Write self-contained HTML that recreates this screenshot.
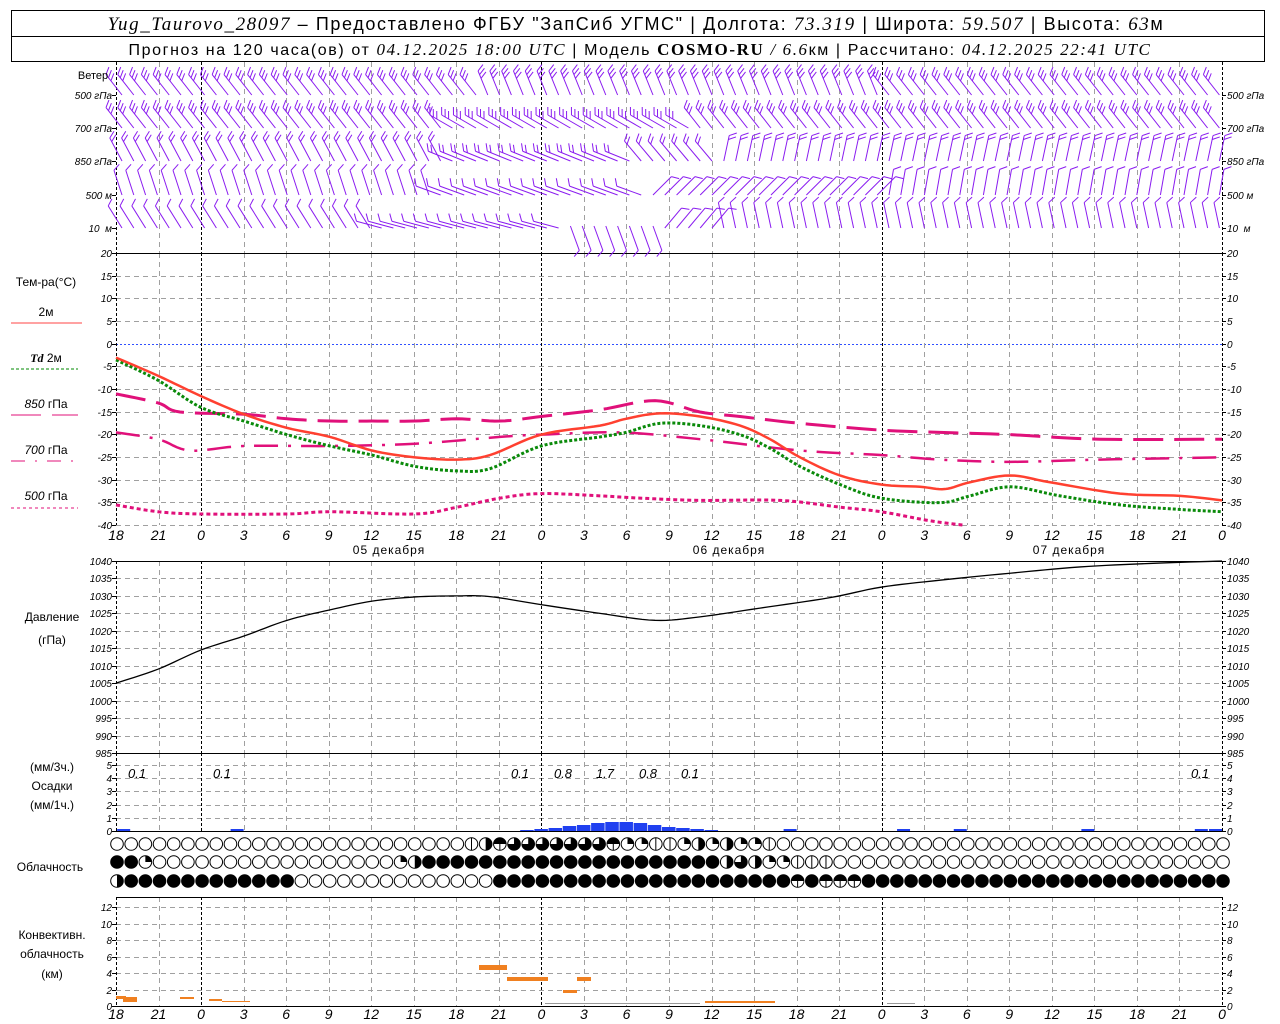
<!DOCTYPE html>
<html><head><meta charset="utf-8">
<style>
html,body{margin:0;padding:0;background:#fff;}
svg{display:block;}
.t{font-family:"Liberation Sans",sans-serif;fill:#000;}
.i{font-family:"Liberation Serif",serif;font-style:italic;fill:#000;}
.tk{font-family:"Liberation Sans",sans-serif;font-style:italic;font-size:10px;fill:#000;}
.hr{font-family:"Liberation Sans",sans-serif;font-style:italic;font-size:14px;fill:#000;text-anchor:middle;}
.lb{font-family:"Liberation Sans",sans-serif;font-size:12px;fill:#000;text-anchor:middle;}
</style></head>
<body>
<svg id="s" width="1280" height="1024" viewBox="0 0 1280 1024" xmlns="http://www.w3.org/2000/svg">
<rect x="0" y="0" width="1280" height="1024" fill="#fff"/>
<rect x="11.5" y="10.5" width="1253" height="51" fill="none" stroke="#000"/>
<line x1="11" y1="36.5" x2="1265" y2="36.5" stroke="#000"/>
<text x="636" y="30" text-anchor="middle" style="font-size:18px;letter-spacing:1.6px" class="t"><tspan class="i" font-size="19">Yug_Taurovo_28097</tspan> – Предоставлено ФГБУ "ЗапСиб УГМС" | Долгота: <tspan class="i" font-size="19">73.319</tspan> | Широта: <tspan class="i" font-size="19">59.507</tspan> | Высота: <tspan class="i" font-size="19">63</tspan>м</text>
<text x="640" y="55" text-anchor="middle" style="font-size:16px;letter-spacing:1.6px" class="t">Прогноз на 120 часа(ов) от <tspan class="i" font-size="17">04.12.2025 18:00 UTC</tspan> | Модель <tspan font-family="Liberation Serif" font-weight="bold" font-size="17">COSMO-RU</tspan> <tspan class="i" font-size="17">/ 6.6</tspan>км | Рассчитано: <tspan class="i" font-size="17">04.12.2025 22:41 UTC</tspan></text>

<g id="grid"></g>
<g id="draw"></g>

<text x="93" y="79" class="t" font-size="11" text-anchor="middle">Ветер</text>
<g class="tk" text-anchor="end">
<text x="112" y="99">500 гПа</text><text x="112" y="132">700 гПа</text><text x="112" y="165">850 гПа</text><text x="112" y="199">500 м</text><text x="112" y="232">10 &#160;м</text>
</g>
<g class="tk">
<text x="1227" y="99">500 гПа</text><text x="1227" y="132">700 гПа</text><text x="1227" y="165">850 гПа</text><text x="1227" y="199">500 м</text><text x="1227" y="232">10 &#160;м</text>
</g>
<text x="46" y="286" class="lb">Тем-ра(°C)</text>
<text x="46" y="316" class="lb" font-size="11">2м</text>
<line x1="11" y1="323" x2="82" y2="323" stroke="#f44" stroke-width="1"/>
<text x="46" y="362" class="lb" font-size="11"><tspan class="i" font-weight="bold">Td</tspan>  2м</text>
<line x1="11" y1="369" x2="78" y2="369" stroke="#080" stroke-dasharray="3,2"/>
<text x="46" y="408" class="lb" font-size="11"><tspan font-style="italic">850</tspan> гПа</text>
<line x1="11" y1="415" x2="78" y2="415" stroke="#e0107a" stroke-dasharray="30,11"/>
<text x="46" y="454" class="lb" font-size="11"><tspan font-style="italic">700</tspan> гПа</text>
<line x1="11" y1="461" x2="78" y2="461" stroke="#e0107a" stroke-dasharray="14,10,2,10"/>
<text x="46" y="500" class="lb" font-size="11"><tspan font-style="italic">500</tspan> гПа</text>
<line x1="11" y1="508" x2="78" y2="508" stroke="#e0107a" stroke-dasharray="3,3"/>

<text x="52" y="621" class="lb">Давление</text>
<text x="52" y="644" class="lb">(гПа)</text>
<text x="52" y="771" class="lb">(мм/3ч.)</text>
<text x="52" y="790" class="lb">Осадки</text>
<text x="52" y="809" class="lb">(мм/1ч.)</text>
<text x="50" y="871" class="lb">Облачность</text>
<text x="52" y="939" class="lb">Конвективн.</text>
<text x="52" y="958" class="lb">облачность</text>
<text x="52" y="978" class="lb">(км)</text>

<g class="tk" text-anchor="end">
<text x="112" y="257">20</text><text x="112" y="280">15</text><text x="112" y="302">10</text><text x="112" y="325">5</text><text x="112" y="348">0</text><text x="112" y="370">-5</text><text x="112" y="393">-10</text><text x="112" y="416">-15</text><text x="112" y="438">-20</text><text x="112" y="461">-25</text><text x="112" y="484">-30</text><text x="112" y="506">-35</text><text x="112" y="529">-40</text>
<text x="112" y="565">1040</text><text x="112" y="582">1035</text><text x="112" y="600">1030</text><text x="112" y="617">1025</text><text x="112" y="635">1020</text><text x="112" y="652">1015</text><text x="112" y="670">1010</text><text x="112" y="687">1005</text><text x="112" y="705">1000</text><text x="112" y="722">995</text><text x="112" y="740">990</text><text x="112" y="757">985</text>
<text x="112" y="835">0</text><text x="112" y="822">1</text><text x="112" y="809">2</text><text x="112" y="795">3</text><text x="112" y="782">4</text><text x="112" y="769">5</text>
<text x="112" y="1010">0</text><text x="112" y="994">2</text><text x="112" y="977">4</text><text x="112" y="961">6</text><text x="112" y="944">8</text><text x="112" y="928">10</text><text x="112" y="911">12</text>
</g>
<g class="tk">
<text x="1227" y="257">20</text><text x="1227" y="280">15</text><text x="1227" y="302">10</text><text x="1227" y="325">5</text><text x="1227" y="348">0</text><text x="1227" y="370">-5</text><text x="1227" y="393">-10</text><text x="1227" y="416">-15</text><text x="1227" y="438">-20</text><text x="1227" y="461">-25</text><text x="1227" y="484">-30</text><text x="1227" y="506">-35</text><text x="1227" y="529">-40</text>
<text x="1227" y="565">1040</text><text x="1227" y="582">1035</text><text x="1227" y="600">1030</text><text x="1227" y="617">1025</text><text x="1227" y="635">1020</text><text x="1227" y="652">1015</text><text x="1227" y="670">1010</text><text x="1227" y="687">1005</text><text x="1227" y="705">1000</text><text x="1227" y="722">995</text><text x="1227" y="740">990</text><text x="1227" y="757">985</text>
<text x="1227" y="835">0</text><text x="1227" y="822">1</text><text x="1227" y="809">2</text><text x="1227" y="795">3</text><text x="1227" y="782">4</text><text x="1227" y="769">5</text>
<text x="1227" y="1010">0</text><text x="1227" y="994">2</text><text x="1227" y="977">4</text><text x="1227" y="961">6</text><text x="1227" y="944">8</text><text x="1227" y="928">10</text><text x="1227" y="911">12</text>
</g>

<g class="tk" text-anchor="middle">
<text x="137" y="778" font-size="13">0.1</text><text x="222" y="778" font-size="13">0.1</text><text x="520" y="778" font-size="13">0.1</text><text x="563" y="778" font-size="13">0.8</text><text x="605" y="778" font-size="13">1.7</text><text x="648" y="778" font-size="13">0.8</text><text x="690" y="778" font-size="13">0.1</text><text x="1200" y="778" font-size="13">0.1</text>
</g>

<g class="hr">
<text x="116" y="540">18</text><text x="158.5" y="540">21</text><text x="201" y="540">0</text><text x="243.6" y="540">3</text><text x="286.2" y="540">6</text><text x="328.7" y="540">9</text><text x="371.2" y="540">12</text><text x="413.8" y="540">15</text><text x="456.3" y="540">18</text><text x="498.9" y="540">21</text><text x="541.4" y="540">0</text><text x="583.9" y="540">3</text><text x="626.5" y="540">6</text><text x="669" y="540">9</text><text x="711.6" y="540">12</text><text x="754.1" y="540">15</text><text x="796.6" y="540">18</text><text x="839.2" y="540">21</text><text x="881.7" y="540">0</text><text x="924.3" y="540">3</text><text x="966.8" y="540">6</text><text x="1009.3" y="540">9</text><text x="1051.9" y="540">12</text><text x="1094.4" y="540">15</text><text x="1137" y="540">18</text><text x="1179.5" y="540">21</text><text x="1222" y="540">0</text>
<text x="116" y="1019">18</text><text x="158.5" y="1019">21</text><text x="201" y="1019">0</text><text x="243.6" y="1019">3</text><text x="286.2" y="1019">6</text><text x="328.7" y="1019">9</text><text x="371.2" y="1019">12</text><text x="413.8" y="1019">15</text><text x="456.3" y="1019">18</text><text x="498.9" y="1019">21</text><text x="541.4" y="1019">0</text><text x="583.9" y="1019">3</text><text x="626.5" y="1019">6</text><text x="669" y="1019">9</text><text x="711.6" y="1019">12</text><text x="754.1" y="1019">15</text><text x="796.6" y="1019">18</text><text x="839.2" y="1019">21</text><text x="881.7" y="1019">0</text><text x="924.3" y="1019">3</text><text x="966.8" y="1019">6</text><text x="1009.3" y="1019">9</text><text x="1051.9" y="1019">12</text><text x="1094.4" y="1019">15</text><text x="1137" y="1019">18</text><text x="1179.5" y="1019">21</text><text x="1222" y="1019">0</text>
</g>
<g class="lb" font-size="13" style="letter-spacing:1px">
<text x="389" y="554">05 декабря</text><text x="729" y="554">06 декабря</text><text x="1069" y="554">07 декабря</text>
</g>
</svg>
<script>
(function(){
var NS="http://www.w3.org/2000/svg";
var G=document.getElementById("grid"),D=document.getElementById("draw");
function el(p,n,a){var e=document.createElementNS(NS,n);for(var k in a)e.setAttribute(k,a[k]);p.appendChild(e);return e;}
function L(p,x1,y1,x2,y2,a){a=a||{};a.x1=x1;a.y1=y1;a.x2=x2;a.y2=y2;if(!a.stroke)a.stroke="#000";return el(p,"line",a);}
var X0=116,X1=1222,step=(X1-X0)/26;
var hy=[276,298,321,366,389,412,434,457,480,502,525, 578,596,613,631,648,666,683,701,718,736, 765,778,791,805,818, 907,924,940,957,973,990];
hy.forEach(function(y){L(G,X0,y+.5,X1,y+.5,{stroke:"#a0a0a0","stroke-dasharray":"5,4"});});
L(G,X0,344.5,X1,344.5,{stroke:"#3050ff","stroke-dasharray":"2,2"});
for(var k=0;k<=26;k++){var x=Math.round(X0+k*step)+.5;var mid=(k==2||k==10||k==18);
 var a=mid?{stroke:"#000","stroke-dasharray":"3,2"}:{stroke:"#a0a0a0","stroke-dasharray":"5,4"};
 if(k==0||k==26)a={stroke:"#000","stroke-dasharray":"3,2"};
 [[62,253],[253,525],[561,753],[753,831],[897,1006]].forEach(function(r){var b={};for(var q in a)b[q]=a[q];L(G,x,r[0],x,r[1],b);});
}
[253,561,753,831,897,1006].forEach(function(y){L(G,X0,y+.5,X1,y+.5,{stroke:"#000"});});
function ticks(list){list.forEach(function(y){L(G,X0-4,y+.5,X0,y+.5);L(G,X1,y+.5,X1+4,y+.5);});}
ticks([253,276,298,321,344,366,389,412,434,457,480,502,525,561,578,596,613,631,648,666,683,701,718,736,753,765,778,791,805,818,831,907,924,940,957,973,990,1006,95,128,161,195,228]);
function ty(v){return 344-v*4.533;}
function poly(pts,fy,attr){var s="";for(var i=0;i<pts.length;i+=2)s+=pts[i]+","+fy(pts[i+1])+" ";attr.points=s;attr.fill="none";el(D,"polyline",attr);}
function smooth(pts,n){
 var out=[];var P=[];for(var i=0;i<pts.length;i+=2)P.push([pts[i],pts[i+1]]);
 for(var i=0;i<P.length-1;i++){var p0=P[Math.max(0,i-1)],p1=P[i],p2=P[i+1],p3=P[Math.min(P.length-1,i+2)];
  for(var t=0;t<1;t+=1/n){var t2=t*t,t3=t2*t;
   var f=function(a,b,c,d){return 0.5*((2*b)+(-a+c)*t+(2*a-5*b+4*c-d)*t2+(-a+3*b-3*c+d)*t3);};
   out.push(f(p0[0],p1[0],p2[0],p3[0]),f(p0[1],p1[1],p2[1],p3[1]));}}
 out.push(P[P.length-1][0],P[P.length-1][1]);return out;}
var T500=[116,-35.5,158,-37,201,-37.5,287,-37.5,330,-37,415,-37.5,457,-36,500,-34,541,-33,600,-33.5,640,-34,700,-34.5,780,-34.5,840,-36,881,-37,930,-39,965,-40];
poly(smooth(T500,8),ty,{stroke:"#e0107a","stroke-width":3,"stroke-dasharray":"4,3"});
var T700=[116,-19.5,158,-21,190,-23.5,244,-22.5,330,-22.5,415,-22,500,-20.5,541,-20,620,-19.5,700,-21,800,-23.5,881,-24.5,940,-25.5,1010,-26,1100,-25.5,1222,-25];
poly(smooth(T700,8),ty,{stroke:"#e0107a","stroke-width":2.5,"stroke-dasharray":"24,10,3,10"});
var T850=[116,-11,158,-13,180,-15,244,-15.5,287,-16.5,330,-17,372,-17,415,-17,457,-16.5,500,-17,541,-16,600,-14.5,655,-12.5,700,-15,740,-16,800,-17.5,881,-19,940,-19.5,1010,-20,1100,-21,1222,-21];
poly(smooth(T850,8),ty,{stroke:"#e0107a","stroke-width":3,"stroke-dasharray":"30,11"});
var TD=[116,-3.5,158,-8,201,-14,244,-17,287,-20,330,-22.5,372,-24.5,415,-27,457,-28,490,-27.5,541,-22.5,600,-20.5,626,-19.5,660,-17.5,700,-18,740,-20,770,-23,800,-27,840,-31,881,-34,940,-35,970,-33.5,1010,-31.5,1060,-33.5,1120,-35.5,1180,-36.5,1222,-37];
poly(smooth(TD,8),ty,{stroke:"#0a8a0a","stroke-width":3,"stroke-dasharray":"3,2"});
var T2=[116,-3,158,-7,201,-11.5,244,-15.5,287,-18.5,330,-20.5,372,-23.5,415,-25,457,-25.5,490,-24.5,541,-20,600,-18,626,-16.5,660,-15.3,700,-16,740,-18,770,-21,800,-25,840,-29,881,-31,920,-31.5,945,-32,970,-30.5,1010,-29,1050,-30.5,1120,-33,1180,-33.5,1222,-34.5];
poly(smooth(T2,8),ty,{stroke:"#ff4030","stroke-width":2.5});
var P=[116,1005,158,1009,201,1014.5,244,1018.5,287,1023,330,1026,372,1028.5,415,1029.7,457,1030,490,1029.8,541,1027.5,600,1025,655,1023,700,1024,760,1026.5,830,1029.5,881,1032.5,940,1034.5,1010,1036.5,1080,1038.3,1150,1039.3,1222,1040];
poly(smooth(P,8),function(p){return 561+(1040-p)*3.49;},{stroke:"#000","stroke-width":1.3});
var hs=(X1-X0)/78;
var pb=[[29,1],[30,2],[31,3],[32,5],[33,6],[34,8],[35,9],[36,9],[37,8],[38,6],[39,4],[40,3],[41,2],[42,1]];
pb.forEach(function(b){var x=X0+b[0]*hs-7;el(D,"rect",{x:x,y:831-b[1],width:13.5,height:b[1],fill:"#2040f0"});});
[1,9,48,56,60,69,77,78].forEach(function(i){el(D,"rect",{x:X0+i*hs-13,y:829,width:13,height:2,fill:"#2040f0"});});
var cv=[[116,996,10,3],[123,997,14,5],[180,997,14,2],[209,999,13,2],[222,1001,28,1],[479,965,28,5],[507,977,41,4],[563,990,14,3],[577,977,14,4],[705,1001,70,2]];
cv.forEach(function(c){el(D,"rect",{x:c[0],y:c[1],width:c[2],height:c[3],fill:"#f08020"});});
L(D,545,1003.5,700,1003.5,{stroke:"#999"});L(D,887,1003.5,915,1003.5,{stroke:"#999"});
function rowStr(){var a=[];for(var i=0;i<79;i++)a.push('o');return a;}
function fill(a,from,to,c){for(var i=from;i<=to;i++)a[i]=c;}
var r1=rowStr();r1[25]='l';r1[26]='h';r1[27]='e';fill(r1,28,34,'t');r1[35]='e';r1[36]='q';r1[37]='q';r1[38]='l';r1[39]='l';r1[40]='q';r1[41]='h';r1[42]='q';r1[43]='h';r1[44]='q';r1[45]='q';r1[46]='l';
var r2=rowStr();r2[0]='f';r2[1]='f';r2[2]='q';r2[20]='q';r2[21]='h';fill(r2,22,42,'f');r2[43]='h';r2[44]='t';r2[45]='h';r2[46]='q';r2[47]='q';fill(r2,48,50,'l');
var r3=rowStr();r3[0]='h';fill(r3,1,12,'f');fill(r3,27,78,'f');[48,50,51,52].forEach(function(i){r3[i]='e';});
function cloud(x,y,c){var r=6.3;
 el(D,"circle",{cx:x,cy:y,r:r,fill:c=='f'?"#000":"#fff",stroke:"#000","stroke-width":1});
 if(c=='l')L(D,x,y-r,x,y+r);
 if(c=='h')el(D,"path",{d:"M"+x+","+(y-r)+" A"+r+","+r+" 0 0 1 "+x+","+(y+r)+" Z",fill:"#000"});
 if(c=='e'){el(D,"path",{d:"M"+(x-r)+","+y+" A"+r+","+r+" 0 0 1 "+(x+r)+","+y+" Z",fill:"#000"});L(D,x,y,x,y+r);}
 if(c=='q')el(D,"path",{d:"M"+x+","+y+" L"+x+","+(y-r)+" A"+r+","+r+" 0 0 1 "+(x+r)+","+y+" Z",fill:"#000"});
 if(c=='t')el(D,"path",{d:"M"+x+","+y+" L"+x+","+(y-r)+" A"+r+","+r+" 0 1 1 "+(x-r)+","+y+" Z",fill:"#000"});
}
for(var i=0;i<79;i++){var x=117+i*hs;cloud(x,844,r1[i]);cloud(x,862,r2[i]);cloud(x,881,r3[i]);}
var rows=[95,128,161,195,228];
function ang(r,x){
 if(r==0)return (x>480&&x<880)?22:38;
 if(r==1)return (x>450&&x<700)?60:38;
 if(r==2)return x<450?28:(x<640?68:(x<720?40:-12));
 if(r==3)return x<440?18:(x<650?70:(x<880?-45:-10));
 return x<370?32:(x<560?75:(x<660?-160:(x<720?-40:12)));
}
function barb(x,y,a,nf){var rad=a*Math.PI/180,len=26;var ux=-Math.sin(rad),uy=-Math.cos(rad);
 var tx=x+ux*len,tyy=y+uy*len;var st={stroke:"#8a1cf0","stroke-width":1};
 L(D,x,y,tx,tyy,st);var px=-uy,py=ux;
 for(var f=0;f<nf;f++){var bx=tx-ux*4*f,by=tyy-uy*4*f;var dx=px*0.85+ux*0.5,dy=py*0.85+uy*0.5;var m=Math.hypot(dx,dy);
  L(D,bx,by,bx+dx/m*8,by+dy/m*8,{stroke:"#8a1cf0","stroke-width":1});}
}
for(var r=0;r<5;r++){for(var x=122;x<1222;x+=11.8){var a=ang(r,x);var nf=(r<2)?3:(r==2?2:1);
 if(r==4&&x>370)nf=1;
 var by=rows[r];if(r==4&&a<-90)by=226;
 barb(x,by,a,nf);}}
})();
</script>
</body></html>
